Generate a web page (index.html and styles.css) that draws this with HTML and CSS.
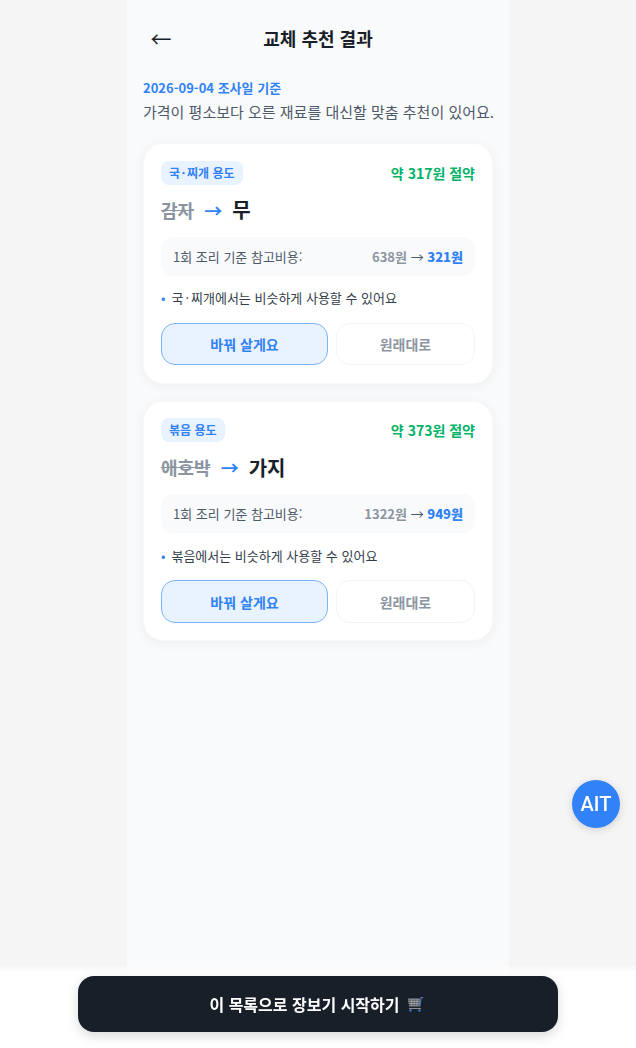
FILE: index.html
```html
<!DOCTYPE html>
<html lang="ko">
<head>
    <meta charset="UTF-8">
    <meta name="viewport" content="width=device-width, initial-scale=1.0">
    <title>교체 추천 결과</title>
    <link rel="stylesheet" href="styles.css">
</head>
<body>
    <div class="page">
        <div class="header">
            <button class="back">←</button>
            <h1>교체 추천 결과</h1>
        </div>

        <div class="intro">
            <p class="date">2026-09-04 조사일 기준</p>
            <p class="desc">가격이 평소보다 오른 재료를 대신할 맞춤 추천이 있어요.</p>
        </div>

        <div class="card">
            <div class="card-top">
                <span class="tag">국<span class="mid">·</span>찌개 용도</span>
                <span class="save">약 317원 절약</span>
            </div>
            <div class="swap">
                <span class="from">감자</span>
                <span class="swap-arrow">→</span>
                <span class="to">무</span>
            </div>
            <div class="cost">
                <span>1회 조리 기준 참고비용:</span>
                <span class="price">638원 <i>→</i> <b>321원</b></span>
            </div>
            <p class="reason">국<span class="mid">·</span>찌개에서는 비슷하게 사용할 수 있어요</p>
            <div class="actions">
                <button class="btn-yes">바꿔 살게요</button>
                <button class="btn-no">원래대로</button>
            </div>
        </div>

        <div class="card">
            <div class="card-top">
                <span class="tag">볶음 용도</span>
                <span class="save">약 373원 절약</span>
            </div>
            <div class="swap">
                <span class="from">애호박</span>
                <span class="swap-arrow">→</span>
                <span class="to">가지</span>
            </div>
            <div class="cost">
                <span>1회 조리 기준 참고비용:</span>
                <span class="price">1322원 <i>→</i> <b>949원</b></span>
            </div>
            <p class="reason">볶음에서는 비슷하게 사용할 수 있어요</p>
            <div class="actions">
                <button class="btn-yes">바꿔 살게요</button>
                <button class="btn-no">원래대로</button>
            </div>
        </div>
    </div>

    <button class="fab">AIT</button>

    <div class="bottom">
        <button class="start">
            이 목록으로 장보기 시작하기
            <svg class="cart" width="20" height="16" viewBox="0 0 20 16" fill="none">
                <path d="M1 3h12v7H2z" fill="#55595f"/>
                <path d="M1 3h12M1 5.3h12M1.5 7.6h11.5M2 10h11M4.5 3v7M7.2 3v7M10 3v7" stroke="#a3a6ab" stroke-width="0.8"/>
                <path d="M13 10l1.2-8.5h2" stroke="#4f7cc0" stroke-width="1.1"/>
                <path d="M2 12.5h12" stroke="#8b8f96" stroke-width="1.1"/>
                <circle cx="3.5" cy="14.5" r="1.2" fill="#3f76c9"/>
                <circle cx="12.5" cy="14.5" r="1.2" fill="#3f76c9"/>
            </svg>
        </button>
    </div>
</body>
</html>
```

FILE: styles.css
```css
* {
    box-sizing: border-box;
}
body {
    margin: 0;
    background-color: #f5f5f5;
    color: #191f28;
    font-family: "Noto Sans CJK KR", "Noto Sans", sans-serif;
}
button {
    font-family: inherit;
    cursor: pointer;
}
p {
    margin: 0;
}
.page {
    width: 382px;
    min-height: 1048px;
    margin: 0 auto;
    padding: 0 16px;
    background-color: #f9fafb;
}
.header {
    position: relative;
    height: 78px;
    display: flex;
    align-items: center;
    justify-content: center;
}
.header h1 {
    margin: 0 0 2px;
    font-size: 18px;
    font-weight: 700;
}
.back {
    position: absolute;
    left: 0;
    top: 18px;
    width: 36px;
    height: 40px;
    padding: 0;
    border: none;
    background: none;
    color: #191f28;
    font-size: 21px;
}
.intro {
    margin-bottom: 20px;
}
.date {
    font-size: 13px;
    line-height: 20px;
    font-weight: 700;
    color: #3182f6;
}
.desc {
    margin-top: 3px;
    font-size: 15px;
    line-height: 22px;
    color: #4e5968;
    white-space: nowrap;
}
.card {
    height: 240.5px;
    margin-bottom: 17px;
    padding: 16.9px 17px 17px;
    background-color: #fff;
    border: 1px solid #f8f9fa;
    border-radius: 20px;
    box-shadow: 0 2px 12px rgba(0, 0, 0, 0.05);
}
.card-top {
    display: flex;
    justify-content: space-between;
    align-items: center;
    height: 24px;
}
.tag {
    padding: 0 8px;
    height: 24px;
    line-height: 24px;
    font-size: 12px;
    font-weight: 700;
    color: #3182f6;
    background-color: #e8f3ff;
    border-radius: 8px;
}
.mid {
    margin: 0 2px;
}
.tag .mid {
    margin: 0 1.5px;
}
.save {
    font-size: 14px;
    font-weight: 700;
    color: #00b368;
}
.swap {
    display: flex;
    align-items: center;
    gap: 10px;
    height: 30px;
    margin-top: 10.1px;
    font-size: 20px;
    font-weight: 700;
}
.from {
    font-size: 18px;
    color: #8b95a1;
    text-decoration: line-through;
}
.swap-arrow {
    font-size: 18px;
    color: #3182f6;
}
.cost {
    display: flex;
    justify-content: space-between;
    align-items: center;
    height: 39px;
    margin-top: 11.9px;
    padding: 0 12px;
    background-color: #f9fafb;
    border-radius: 12px;
    font-size: 13px;
    color: #4e5968;
}
.price {
    font-weight: 700;
    color: #8b95a1;
}
.price i {
    font-style: normal;
    font-weight: 400;
    color: #4e5968;
}
.price b {
    color: #3182f6;
}
.reason {
    margin-top: 12.3px;
    font-size: 13px;
    line-height: 20px;
    color: #333d4b;
}
.reason::before {
    content: "•";
    margin-right: 6px;
    color: #3182f6;
}
.actions {
    display: flex;
    gap: 8px;
    margin-top: 14.8px;
}
.actions button {
    height: 42.5px;
    font-size: 14px;
    font-weight: 700;
    border-radius: 14px;
}
.btn-yes {
    width: 167px;
    color: #3182f6;
    background-color: #e8f3ff;
    border: 1px solid #7fb3f9;
}
.btn-no {
    flex: 1;
    color: #8b95a1;
    background-color: #fff;
    border: 1px solid #f2f4f6;
}
.fab {
    position: fixed;
    right: 16px;
    bottom: 220px;
    width: 48px;
    height: 48px;
    padding: 0;
    border: none;
    border-radius: 50%;
    background-color: #3182f6;
    color: #fff;
    font-family: Roboto, sans-serif;
    font-size: 20px;
    font-weight: 500;
    box-shadow: 0 2px 8px rgba(0, 0, 0, 0.15);
}
.bottom {
    position: fixed;
    left: 0;
    right: 0;
    bottom: 0;
    display: flex;
    justify-content: center;
    padding: 12px 0 16px;
    background: linear-gradient(to bottom, rgba(255, 255, 255, 0), #fff 10px);
}
.start {
    display: flex;
    align-items: center;
    justify-content: center;
    gap: 7px;
    width: 480px;
    height: 56px;
    padding: 0;
    border: none;
    border-radius: 16px;
    background-color: #191f28;
    color: #fff;
    font-size: 16px;
    font-weight: 700;
    box-shadow: 0 4px 12px rgba(0, 0, 0, 0.15);
}
```
